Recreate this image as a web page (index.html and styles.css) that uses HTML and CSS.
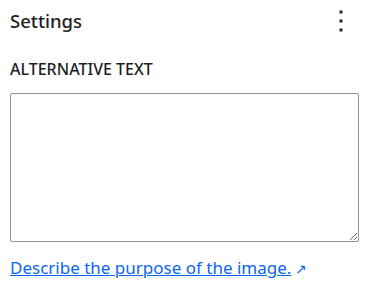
FILE: index.html
```html
<!DOCTYPE html>
<html lang="en">
<head>
    <meta charset="UTF-8">
    <title>Settings</title>
    <link rel="stylesheet" href="styles.css">
</head>
<body>
    <div class="panel">
        <div class="panel-header">
            <h2 class="panel-title">Settings</h2>
            <button class="more-button" aria-label="Options">
                <svg width="24" height="24" viewBox="0 0 24 24">
                    <rect x="10.5" y="1.5" width="3" height="3" fill="#2a2a2a"/>
                    <rect x="10.5" y="10.5" width="3" height="3" fill="#2a2a2a"/>
                    <rect x="10.5" y="19.5" width="3" height="3" fill="#2a2a2a"/>
                </svg>
            </button>
        </div>
        <label class="field-label" for="alt-text">Alternative text</label>
        <textarea class="field-input" id="alt-text"></textarea>
        <div class="help">
            <a class="help-link" href="#">Describe the purpose of the image.</a><span class="external-arrow">↗</span>
        </div>
    </div>
</body>
</html>
```
FILE: styles.css
```css
body {
    margin: 0;
    background-color: #fff;
    font-family: "Noto Sans", "Open Sans", Arial, sans-serif;
    color: #1e1e1e;
}

.panel {
    padding: 9px 14px 0 10px;
}
.panel-header {
    display: flex;
    align-items: center;
    justify-content: space-between;
    height: 24px;
}
.panel-title {
    margin: 0;
    font-size: 18.5px;
    line-height: 24px;
    font-weight: 500;
}
.more-button {
    border: none;
    background: none;
    padding: 0;
    margin-right: 5px;
    width: 24px;
    height: 24px;
}
.more-button svg {
    display: block;
}
.field-label {
    display: block;
    margin-top: 26px;
    font-size: 16px;
    line-height: 20px;
    font-weight: 500;
    text-transform: uppercase;
}
.field-input {
    display: block;
    box-sizing: border-box;
    width: 349px;
    height: 149px;
    margin-top: 14px;
    border: 1px solid #949494;
    border-radius: 2px;
    resize: vertical;
}
.help {
    margin-top: 14px;
    line-height: 24px;
}
.help-link {
    font-size: 17px;
    color: #0b66f0;
}
.external-arrow {
    margin-left: 4px;
    font-size: 14px;
    color: #0b66f0;
}
```
